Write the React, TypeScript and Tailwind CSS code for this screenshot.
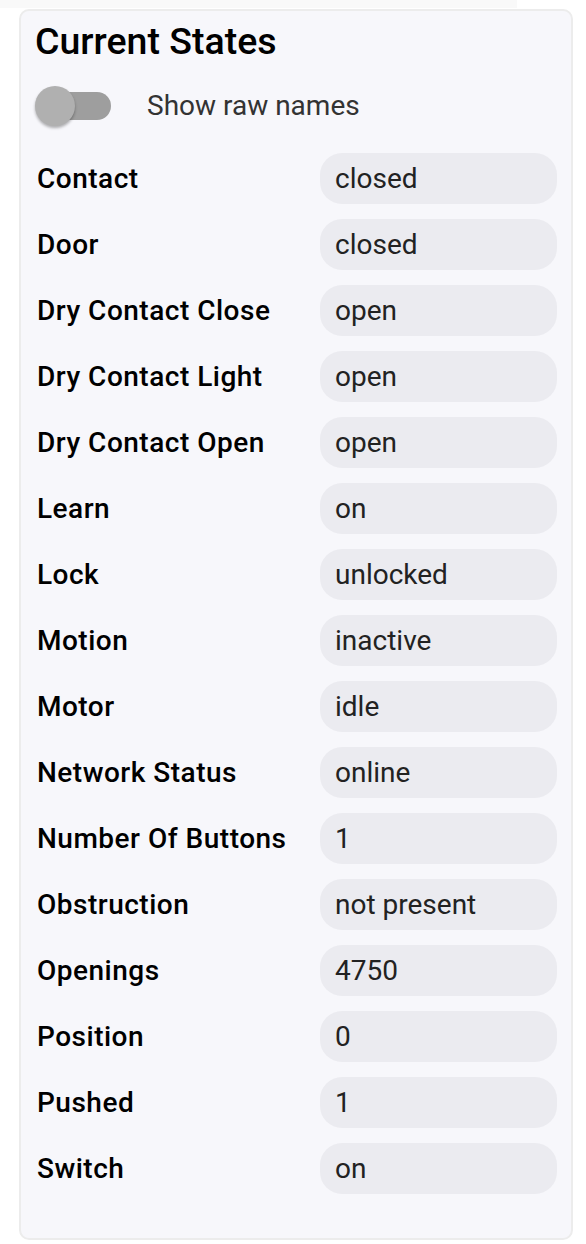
const rows: [string, string][] = [
  ["Contact", "closed"],
  ["Door", "closed"],
  ["Dry Contact Close", "open"],
  ["Dry Contact Light", "open"],
  ["Dry Contact Open", "open"],
  ["Learn", "on"],
  ["Lock", "unlocked"],
  ["Motion", "inactive"],
  ["Motor", "idle"],
  ["Network Status", "online"],
  ["Number Of Buttons", "1"],
  ["Obstruction", "not present"],
  ["Openings", "4750"],
  ["Position", "0"],
  ["Pushed", "1"],
  ["Switch", "on"],
];

function Toggle() {
  return (
    <div className="relative w-[80px] h-[42px] flex items-center">
      <div className="ml-[8px] w-[68px] h-[28px] rounded-full bg-[#9e9e9e]" />
      <div className="absolute left-0 top-[1px] w-[40px] h-[40px] rounded-full bg-[#b0b0b0] shadow-[0_2px_3px_rgba(0,0,0,0.3)]" />
    </div>
  );
}

export default function App() {
  return (
    <div className="min-h-[1244px] bg-white font-['Roboto',sans-serif]">
      <div className="w-[517px] h-[8px] bg-[#f9f9f9]" />
      <div className="ml-[19px] mt-[1px] w-[554px] rounded-[10px] border-2 border-[#ececec] bg-[#f7f7fb] pl-[14px] pr-[14px] pt-[9px] pb-[44px]">
        <h2 className="text-[37.5px] leading-[42px] font-medium text-black">Current States</h2>

        <div className="mt-[22px] flex items-center gap-[32px] h-[44px]">
          <Toggle />
          <span className="text-[28px] text-[#333]">Show raw names</span>
        </div>

        <div className="mt-[25px] flex flex-col gap-[15px]">
          {rows.map(([label, value]) => (
            <div key={label} className="grid grid-cols-[285px_237px] items-center">
              <span className="pl-[2px] text-[28px] font-medium tracking-[0.5px] text-black">{label}</span>
              <div className="h-[51px] rounded-[22px] bg-[#ebebf0] pl-[15px] flex items-center text-[28px] text-[#222]">
                {value}
              </div>
            </div>
          ))}
        </div>
      </div>
    </div>
  );
}
